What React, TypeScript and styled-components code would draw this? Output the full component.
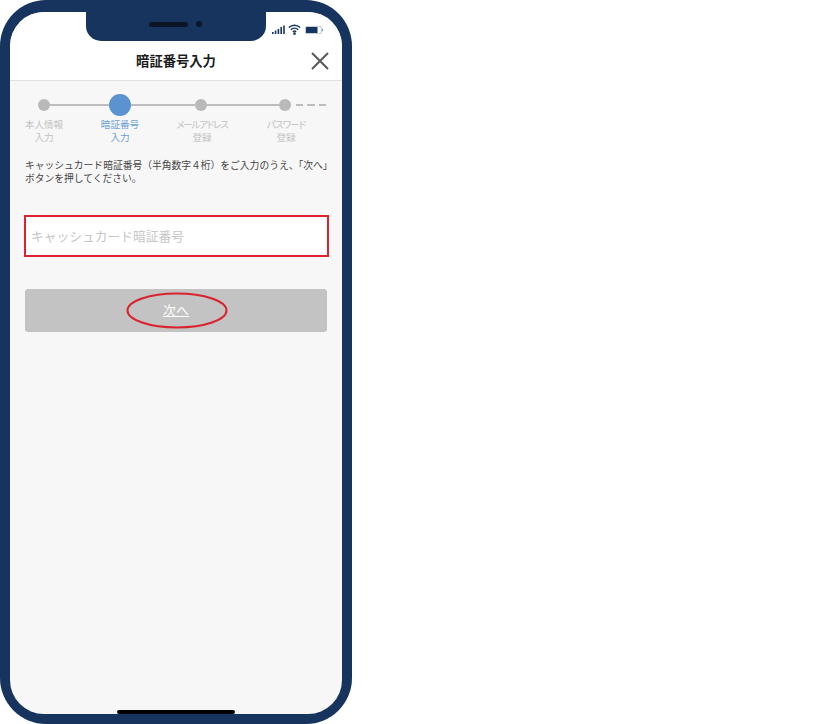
import React from "react";
import styled, { createGlobalStyle } from "styled-components";

const Global = createGlobalStyle`
  html, body { margin: 0; padding: 0; background: #fff; }
  body { font-family: "Noto Sans CJK JP", "Noto Sans", sans-serif; }
`;

const Frame = styled.div`
  position: relative;
  width: 352px;
  height: 724px;
  box-sizing: border-box;
  padding: 12px 10px 10px;
  background: #16345e;
  border-radius: 46px 46px 46px 46px;
`;

const Screen = styled.div`
  height: 100%;
  display: flex;
  flex-direction: column;
  background: #f7f7f7;
  border-radius: 34px;
  overflow: hidden;
`;

const Notch = styled.div`
  position: absolute;
  top: 0;
  left: 86px;
  width: 180px;
  height: 41px;
  background: #16345e;
  border-radius: 0 0 15px 15px;
  display: flex;
  align-items: center;
  justify-content: center;
  gap: 8px;
  padding-top: 7px;
  padding-right: 1px;
  box-sizing: border-box;
`;

const Speaker = styled.span`
  width: 39px;
  height: 5px;
  border-radius: 3px;
  background: #0b1526;
`;

const Camera = styled.span`
  width: 6px;
  height: 6px;
  border-radius: 50%;
  background: #0b1526;
`;

const StatusIcons = styled.div`
  position: absolute;
  top: 24px;
  left: 272px;
  display: flex;
  align-items: center;
  gap: 3px;
`;

const Header = styled.header`
  position: relative;
  height: 69px;
  flex: none;
  box-sizing: border-box;
  background: #fff;
  border-bottom: 1px solid #e2e2e2;
  display: flex;
  align-items: center;
  justify-content: center;
  padding-top: 30px;
`;

const Title = styled.h1`
  margin: 0;
  font-size: 13.3px;
  line-height: 20px;
  font-weight: 700;
  color: #1c1c1c;
`;

const Close = styled.svg`
  position: absolute;
  right: 13px;
  top: 40px;
`;

const Stepper = styled.div`
  display: flex;
  align-items: center;
  height: 22px;
  margin-top: 13px;
  padding-left: 28px;
`;

const Dot = styled.span<{ $active?: boolean }>`
  flex: none;
  width: ${(p) => (p.$active ? 22 : 12)}px;
  height: ${(p) => (p.$active ? 22 : 12)}px;
  border-radius: 50%;
  background: ${(p) => (p.$active ? "#5b93d1" : "#b9b9b9")};
`;

const Line = styled.span<{ $w: number }>`
  flex: none;
  width: ${(p) => p.$w}px;
  height: 2px;
  background: #bdbdbd;
`;

const Dashes = styled.span`
  flex: none;
  width: 30px;
  margin-left: 5px;
  height: 2px;
  background: repeating-linear-gradient(to right, #bdbdbd 0 7px, transparent 7px 11.5px);
`;

const Labels = styled.div`
  display: grid;
  grid-template-columns: 68px 84px 80px 88px;
  margin-top: 2px;
`;

const Label = styled.div<{ $active?: boolean }>`
  text-align: center;
  white-space: nowrap;
  font-size: 9.6px;
  line-height: 12.5px;
  font-feature-settings: "palt";
  color: ${(p) => (p.$active ? "#6b9fd6" : "#c2c2c2")};
`;

const TightKana = styled.span<{ $spacing: number }>`
  letter-spacing: ${(p) => p.$spacing}px;
`;

const Description = styled.p`
  margin: 16px 0 0;
  padding: 0 0 0 15px;
  font-size: 9.77px;
  line-height: 12.5px;
  color: #444;
  white-space: nowrap;
`;

const InputBox = styled.div`
  margin: 31px 13px 0 14px;
  height: 42px;
  box-sizing: border-box;
  border: 2px solid #e0212f;
  background: #fff;
  display: flex;
  align-items: center;
  padding: 0 0 2px 5px;
  font-size: 12.75px;
  color: #c6c6c6;
`;

const ButtonWrap = styled.div`
  position: relative;
  margin: 32px 15px 0;
`;

const NextButton = styled.div`
  height: 43px;
  box-sizing: border-box;
  padding-bottom: 2px;
  border-radius: 3px;
  background: #c3c3c3;
  color: #fff;
  font-size: 13px;
  text-decoration: underline;
  display: flex;
  align-items: center;
  justify-content: center;
`;

const Ellipse = styled.svg`
  position: absolute;
  left: 101px;
  top: 3px;
`;

const HomeBar = styled.div`
  position: absolute;
  left: 117px;
  top: 710px;
  width: 118px;
  height: 4px;
  border-radius: 2px;
  background: #000;
`;

export default function App() {
  return (
    <>
      <Global />
      <Frame>
        <Screen>
          <Header>
            <Title>暗証番号入力</Title>
            <Close width="18" height="18" viewBox="0 0 18 18" fill="none" stroke="#585858" strokeWidth="2">
              <path d="M1 1 L17 17 M17 1 L1 17" />
            </Close>
          </Header>
          <Stepper>
            <Dot />
            <Line $w={59} />
            <Dot $active />
            <Line $w={64} />
            <Dot />
            <Line $w={72} />
            <Dot />
            <Dashes />
          </Stepper>
          <Labels>
            <Label>本人情報<br />入力</Label>
            <Label $active>暗証番号<br />入力</Label>
            <Label><TightKana $spacing={-1.3}>メールアドレス</TightKana><br />登録</Label>
            <Label><TightKana $spacing={-1}>パスワード</TightKana><br />登録</Label>
          </Labels>
          <Description>
            キャッシュカード暗証番号（半角数字４桁）をご入力のうえ、「次へ」<br />
            ボタンを押してください。
          </Description>
          <InputBox>キャッシュカード暗証番号</InputBox>
          <ButtonWrap>
            <NextButton>次へ</NextButton>
            <Ellipse width="102" height="37" viewBox="0 0 102 37" fill="none">
              <ellipse cx="51" cy="18.5" rx="49.5" ry="17" stroke="#d9232e" strokeWidth="2" />
            </Ellipse>
          </ButtonWrap>
        </Screen>
        <Notch>
          <Speaker />
          <Camera />
        </Notch>
        <StatusIcons>
          <svg width="13" height="9" viewBox="0 0 13 9" fill="#16345e">
            <rect x="0" y="7" width="1.6" height="2" />
            <rect x="2.8" y="5.5" width="1.6" height="3.5" />
            <rect x="5.6" y="4" width="1.6" height="5" />
            <rect x="8.4" y="2" width="1.6" height="7" />
            <rect x="11.2" y="0.5" width="1.6" height="8.5" />
          </svg>
          <svg width="13" height="11" viewBox="0 0 13 11" fill="none" stroke="#16345e" strokeWidth="1.4">
            <path d="M0.8 3.6 C4 0.4 9 0.4 12.2 3.6" />
            <path d="M2.8 5.7 C4.9 3.8 8.1 3.8 10.2 5.7" />
            <path d="M4.8 7.7 C5.9 6.9 7.1 6.9 8.2 7.7" />
            <circle cx="6.5" cy="9.6" r="0.7" fill="#16345e" />
          </svg>
          <svg width="19" height="8" viewBox="0 0 19 8" style={{ marginLeft: 1 }}>
            <rect x="0.3" y="0.3" width="16" height="7.4" rx="1.4" fill="#fff" stroke="#8d9bb0" strokeWidth="0.6" />
            <rect x="1" y="1" width="11.5" height="6" rx="0.6" fill="#16345e" />
            <rect x="17" y="2.7" width="1" height="2.6" fill="#8d9bb0" />
          </svg>
        </StatusIcons>
        <HomeBar />
      </Frame>
    </>
  );
}
